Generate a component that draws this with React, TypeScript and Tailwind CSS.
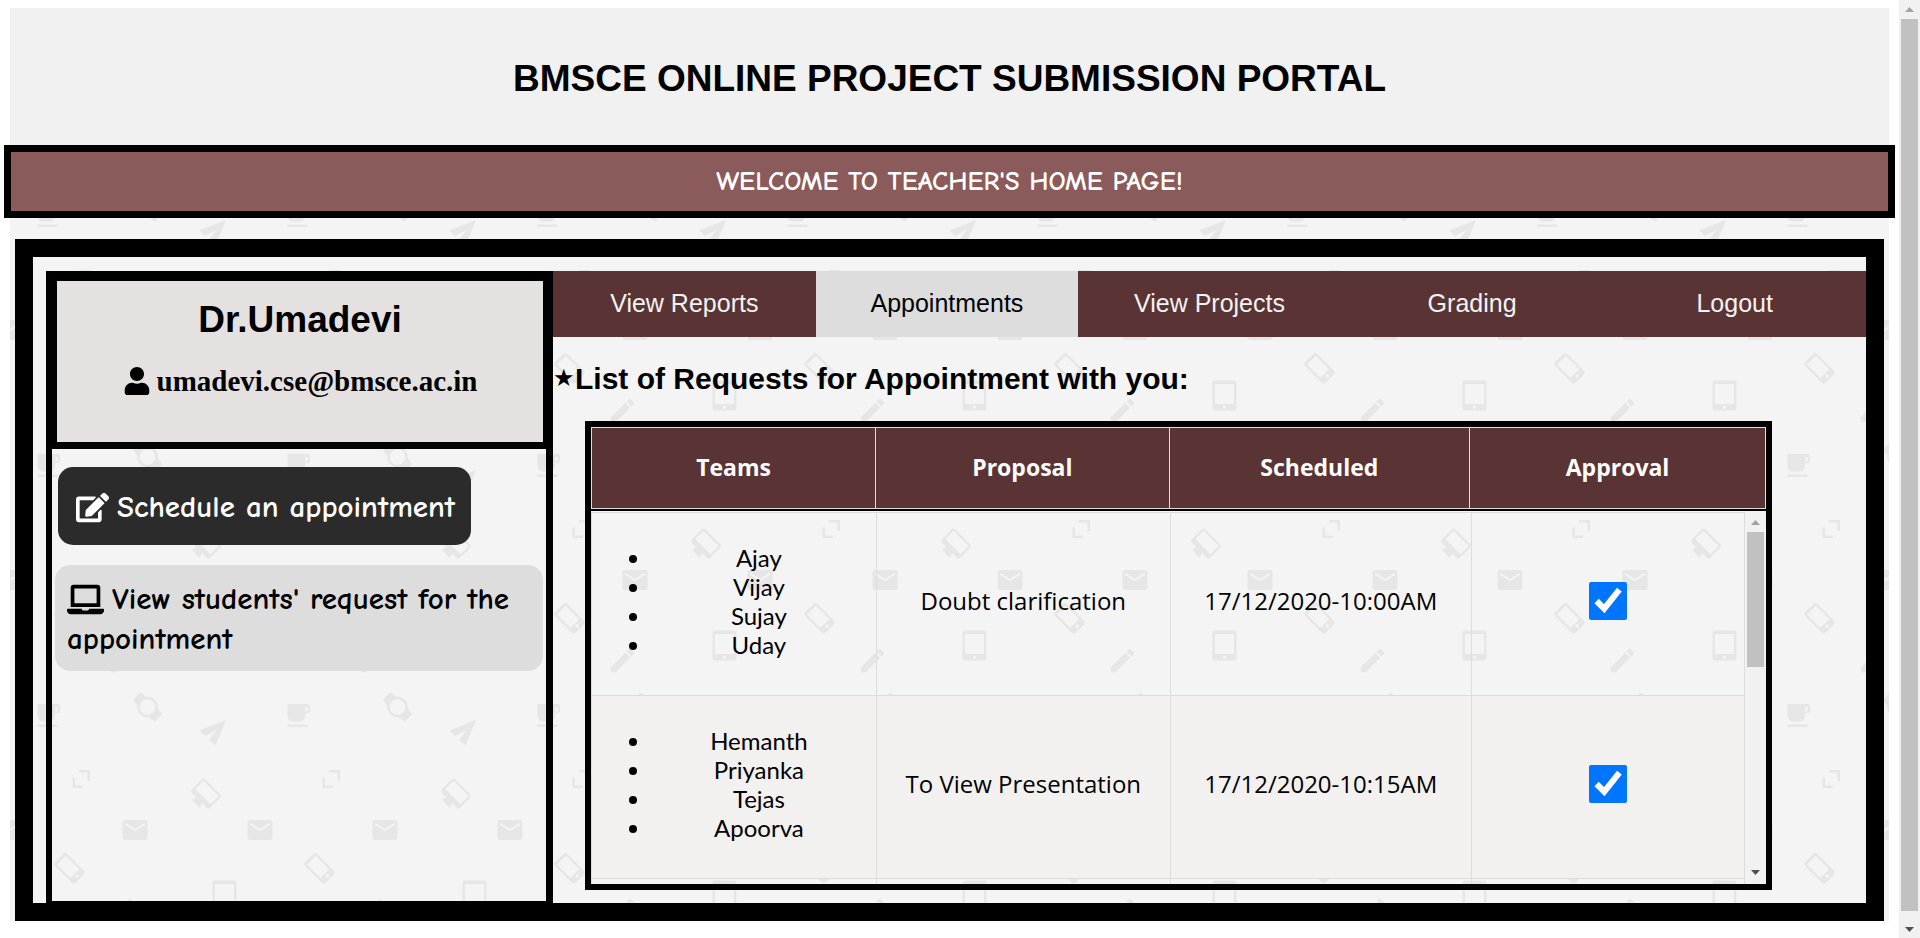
import { FaEdit, FaLaptop, FaUser } from "react-icons/fa";
import { MdEdit, MdMail, MdWatch } from "react-icons/md";

const tabs = ["View Reports", "Appointments", "View Projects", "Grading", "Logout"];
const activeTab = "Appointments";

const requests = [
  {
    team: ["Ajay", "Vijay", "Sujay", "Uday"],
    proposal: "Doubt clarification",
    scheduled: "17/12/2020-10:00AM",
  },
  {
    team: ["Hemanth", "Priyanka", "Tejas", "Apoorva"],
    proposal: "To View Presentation",
    scheduled: "17/12/2020-10:15AM",
  },
];

/** Repeating wallpaper of small office icons. */
function Wallpaper() {
  return (
    <svg aria-hidden="true" className="absolute inset-0 h-full w-full text-[#e6e6e6]">
      <defs>
        <pattern id="tile" x="-10" y="-8" width="250" height="250" patternUnits="userSpaceOnUse">
          <rect width="250" height="250" fill="#f4f4f4" />
          <g fill="currentColor">
            <path
              fillRule="evenodd"
              d="M37.5 204H57.5Q60 204 60 206.5V210.5Q60 213 57.5 213H55V215.500Q55 221.500 49 221.500H43.500Q37.500 221.500 37.500 215.500ZM55.200 207V211.500H57.800V207Z"
            />
            <path d="M37.500 224.500H57.500V227H37.500Z" />
            <path d="M226 220L199.500 230.500L205 236L217 229.500L209 240L215.500 245.500Z" />
            <path d="M79 20H90V31H87.500V22.500H79Z" />
            <path d="M72.500 27.500H75V35.500H83V38H72.500Z" />
            <path
              fillRule="evenodd"
              transform="translate(69.500 118.300) rotate(-45)"
              d="M-5.500 -14.500H5.500Q8.500 -14.500 8.500 -11.500V11.500Q8.500 14.500 5.500 14.500H-5.500Q-8.500 14.500 -8.500 11.500V-11.500Q-8.500 -14.500 -5.500 -14.500ZM-6.300 -11.500V7.500H6.300V-11.500ZM0 9A1.900 1.900 0 1 0 0 12.800A1.900 1.900 0 1 0 0 9Z"
            />
            <path
              fillRule="evenodd"
              d="M215 130.500H234Q236.500 130.500 236.500 133V158Q236.500 160.500 234 160.500H215Q212.500 160.500 212.500 158V133Q212.500 130.500 215 130.500ZM215 134V154H234V134ZM224.500 155.500A1.700 1.700 0 1 0 224.500 158.900A1.700 1.700 0 1 0 224.500 155.500Z"
            />
            <path
              fillRule="evenodd"
              transform="translate(206 43.500) rotate(45)"
              d="M-10.500 -9.500H10.500Q13 -9.500 13 -7V7Q13 9.500 10.500 9.500H4L5.500 14.500H-5.500L-4 9.500H-10.500Q-13 9.500 -13 7V-7Q-13 -9.500 -10.500 -9.500ZM-10.700 -7.200V4.500H10.700V-7.200Z"
            />
          </g>
          <MdEdit x={107} y={145} size={31} />
          <MdMail x={120} y={65} size={30} />
          <MdMail x={-5} y={65} size={30} />
          <MdMail x={245} y={65} size={30} />
          <g transform="translate(147.500 207) rotate(-45)">
            <MdWatch x={-15.5} y={-15.5} size={31} />
          </g>
        </pattern>
      </defs>
      <rect width="100%" height="100%" fill="url(#tile)" />
    </svg>
  );
}

function ScrollArrow({ down = false, className }: { down?: boolean; className: string }) {
  return (
    <svg viewBox="0 0 9 5" className={`h-[5px] w-[9px] shrink-0 ${className}`} fill="currentColor">
      <path d={down ? "M0 0H9L4.500 5Z" : "M0 5H9L4.500 0Z"} />
    </svg>
  );
}

export default function App() {
  return (
    <div className="flex min-h-screen bg-white text-black">
      <div className="min-w-0 flex-1 px-2.5 pt-2">
        <div className="relative">
          <Wallpaper />
          <div className="relative">
            <header className="bg-[#f1f1f1] pt-[50px] pb-[45px] text-center">
              <h1 className="font-['Liberation_Sans',Arial,sans-serif] text-[37px] leading-[42px] font-bold">
                BMSCE ONLINE PROJECT SUBMISSION PORTAL
              </h1>
            </header>

            <p className="-mx-1.5 border-[7px] border-black bg-[#8b5a5a] py-3 text-center font-['Comic_Sans_MS','Comic_Neue',Lato,sans-serif] text-[27px] leading-[35px] font-bold text-white">
              WELCOME TO TEACHER'S HOME PAGE!
            </p>

            <main className="mx-[5px] mt-[21px] flex border-[18px] border-black pt-3.5 pl-[13px]">
              <aside className="w-[507px] shrink-0 border-t-[6px] border-r-[7px] border-b-2 border-l-[6px] border-black">
                <section className="h-[172px] border-t-4 border-r-[3px] border-b-[7px] border-l-[5px] border-black bg-[#e5e1e1] pt-[18px] text-center">
                  <h2 className="font-['Liberation_Sans',Arial,sans-serif] text-[37px] leading-[42px] font-bold">
                    Dr.Umadevi
                  </h2>
                  <p className="mt-6 flex items-center justify-center gap-1.5 font-['Liberation_Serif','Times_New_Roman',serif] text-[29px] leading-8 font-bold">
                    <FaUser size={28} />
                    umadevi.cse@bmsce.ac.in
                  </p>
                </section>
                <div className="flex flex-col items-start gap-5 px-[3px] pt-[18px] font-['Comic_Sans_MS','Comic_Neue',Lato,sans-serif] text-[31px] font-bold">
                  <button
                    type="button"
                    className="ml-[3px] flex h-[78px] items-center gap-2 rounded-[15px] bg-[#2b2b2b] pt-0.5 pr-4 pl-[18px] text-white"
                  >
                    <FaEdit size={33} />
                    Schedule an appointment
                  </button>
                  <button
                    type="button"
                    className="w-full rounded-[15px] bg-[#dddddd] px-3 pt-3.5 pb-3 text-left leading-10"
                  >
                    <FaLaptop size={37} className="mr-2 inline align-[-9px]" />
                    View students' request for the appointment
                  </button>
                </div>
              </aside>

              <div className="min-w-0 flex-1 pb-[13px]">
                <nav className="grid grid-cols-5 bg-[#5a3434] text-center font-['Liberation_Sans',Arial,sans-serif] text-[25px] leading-[30px]">
                  {tabs.map((tab) => (
                    <a
                      key={tab}
                      href="#"
                      aria-current={tab === activeTab ? "page" : undefined}
                      className={
                        tab === activeTab
                          ? "bg-[#dddddd] pt-[17px] pb-[19px] text-black"
                          : "pt-[17px] pb-[19px] text-[#f2f2f2]"
                      }
                    >
                      {tab}
                    </a>
                  ))}
                </nav>

                <h2 className="flex h-[84px] items-center pb-0.5 font-['Liberation_Sans',Arial,sans-serif] text-[30px] font-bold">
                  <span className="text-[24px] font-normal">★</span>
                  List of Requests for Appointment with you:
                </h2>

                <div className="mr-[94px] ml-8 border-[6px] border-black font-['Trebuchet_MS','Open_Sans',sans-serif] text-[24px]">
                  <table className="w-full table-fixed border-collapse text-[23px] text-white">
                    <thead>
                      <tr className="h-[81px] bg-[#5a3434]">
                        <th className="w-[24.2%] border border-[#dddddd] pb-0.5">Teams</th>
                        <th className="w-[25%] border border-[#dddddd] pb-0.5">Proposal</th>
                        <th className="w-[25.6%] border border-[#dddddd] pb-0.5">Scheduled</th>
                        <th className="border border-[#dddddd] pb-0.5">Approval</th>
                      </tr>
                    </thead>
                  </table>
                  <div className="flex h-[375px] border-t-2 border-black">
                    <div className="min-w-0 flex-1 overflow-y-auto pt-px [scrollbar-width:none]">
                      <table aria-label="Appointment requests" className="w-full table-fixed border-collapse text-center">
                        <tbody>
                          {requests.map((request) => (
                            <tr key={request.proposal} className="h-[183px] even:bg-[#f2f1ef]">
                              <td className="w-[24.7%] border border-[#dddddd] pb-1.5">
                                <ul className="list-disc pr-2.5 pl-[60px] font-['Trebuchet_MS',Lato,sans-serif] leading-[29px]">
                                  {request.team.map((member) => (
                                    <li key={member}>{member}</li>
                                  ))}
                                </ul>
                              </td>
                              <td className="w-[25.5%] border border-[#dddddd] pb-1.5">{request.proposal}</td>
                              <td className="w-[26.1%] border border-[#dddddd] pb-1.5">{request.scheduled}</td>
                              <td className="border border-[#dddddd] pb-2">
                                <input
                                  type="checkbox"
                                  defaultChecked
                                  aria-label={`Approve ${request.proposal}`}
                                  className="size-[38px] align-middle accent-[#0075ff]"
                                />
                              </td>
                            </tr>
                          ))}
                          <tr className="h-[183px]">
                            <td className="border border-[#dddddd]" />
                            <td className="border border-[#dddddd]" />
                            <td className="border border-[#dddddd]" />
                            <td className="border border-[#dddddd]" />
                          </tr>
                        </tbody>
                      </table>
                    </div>
                    <div aria-hidden="true" className="flex w-[21px] flex-col items-center bg-[#f1f1f1] py-[9px]">
                      <ScrollArrow className="text-[#a3a3a3]" />
                      <div className="mt-[7px] h-[135px] w-[17px] bg-[#c1c1c1]" />
                      <ScrollArrow down className="mt-auto text-[#505050]" />
                    </div>
                  </div>
                </div>
              </div>
            </main>
          </div>
        </div>
      </div>

      <div aria-hidden="true" className="flex w-[21px] flex-col items-center bg-[#f1f1f1] pt-[7px] pb-[6px]">
        <ScrollArrow className="text-[#a3a3a3]" />
        <div className="mt-[7px] mb-4 w-[17px] flex-1 bg-[#c1c1c1]" />
        <ScrollArrow down className="text-[#505050]" />
      </div>
    </div>
  );
}
